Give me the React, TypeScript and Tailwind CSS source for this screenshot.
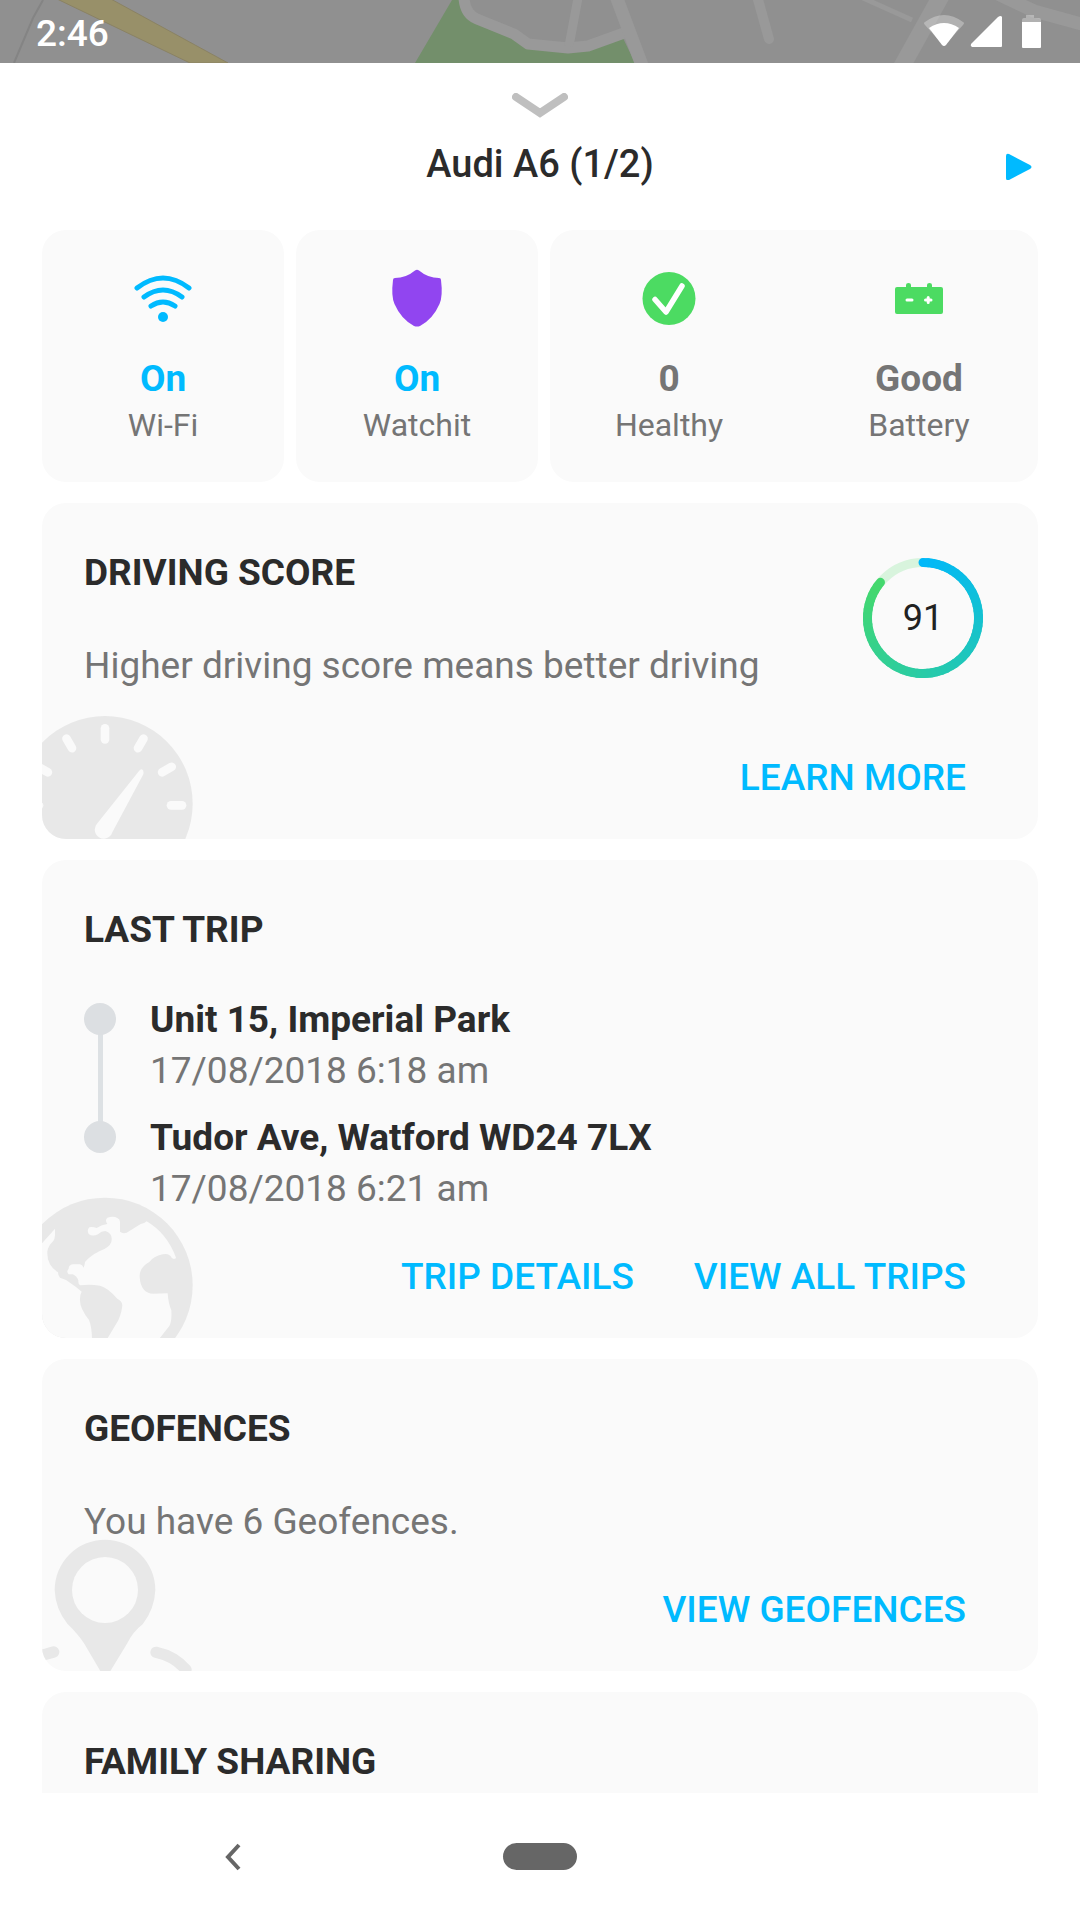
import type { ReactNode } from 'react';

const stops = [
  { place: 'Unit 15, Imperial Park', time: '17/08/2018 6:18 am' },
  { place: 'Tudor Ave, Watford WD24 7LX', time: '17/08/2018 6:21 am' },
];

function StatusBar() {
  return (
    <div className="relative h-[63px] shrink-0 overflow-hidden bg-[#909090]">
      <svg
        className="absolute inset-0 h-full w-full"
        viewBox="0 0 1080 63"
        preserveAspectRatio="xMidYMid slice"
        fill="none"
        aria-hidden="true"
      >
        <path d="M43 0L33 18L14 63" stroke="#848484" strokeWidth="2" />
        <path d="M55 -2L109 -2L228 63H190Z" fill="#989069" stroke="#8a8264" />
        <path d="M452 0L415 63H635L622 36L590 50L540 48L515 38L470 20L460 0Z" fill="#738f6b" />
        <g stroke="#999999" strokeLinejoin="round">
          <path d="M464 -2Q465 14 477 19L514 34L528 44L568 48L588 46L624 33" strokeWidth="11" />
          <path d="M578 -2L569 46" strokeWidth="9" />
          <path d="M616 -4L643 68" strokeWidth="13" />
          <path d="M757 -4L769 39" strokeWidth="10" strokeLinecap="round" />
          <path d="M863 -2L912 20" strokeWidth="5" />
          <path d="M941 -4L901 68" strokeWidth="17" />
          <path d="M998 -6L1034 11L1085 25" strokeWidth="13" />
        </g>
      </svg>
      <div className="relative flex h-full items-center justify-between pr-[39px] pl-9 text-white">
        <span className="pt-1 text-[37px] leading-[42px] font-medium">2:46</span>
        <svg className="h-9 w-[117px]" viewBox="0 0 117 36" fill="#fff" aria-hidden="true">
          <path d="M1 8Q20 -6 39 8Q41 9 39 11L20 32L1 11Q-1 9 1 8Z" opacity="0.3" />
          <path d="M5 14Q20 4 35 14L22 31Q20 33 18 31Z" />
          <path d="M78 3V32Q78 33 77 33H48Q46 32 47 30L74 3Q77 1 78 3Z" />
          <path d="M102 1H110V4H115Q117 4 117 6V9H98V6Q98 4 100 4H102Z" opacity="0.3" />
          <path d="M98 8H117V33Q117 34 116 34H99Q98 34 98 33Z" />
        </svg>
      </div>
    </div>
  );
}

function Header() {
  return (
    <header className="pt-[30px] pb-[45px]">
      <button type="button" aria-label="Collapse" className="mx-auto block">
        <svg className="h-[26px] w-14" viewBox="0 0 56 26" fill="none">
          <path d="M4 4L28 20L52 4" stroke="#bfbfbf" strokeWidth="8" strokeLinecap="round" />
        </svg>
      </button>
      <div className="mt-6 grid grid-cols-[1fr_auto_1fr] items-center pr-12">
        <h1 className="col-start-2 pl-12 text-[38px] leading-[42px] font-medium">Audi A6 (1/2)</h1>
        <button type="button" aria-label="Next vehicle" className="justify-self-end">
          <svg className="h-8 w-[26px]" viewBox="0 0 26 32" fill="#00baff">
            <path d="M0 8Q0 5 3 6L24 17Q27 19 24 21L3 32Q0 33 0 30Z" />
          </svg>
        </button>
      </div>
    </header>
  );
}

function WifiIcon() {
  return (
    <svg className="size-[60px]" viewBox="0 0 60 60" fill="none" stroke="#00baff" strokeWidth="5" strokeLinecap="round">
      <path d="M4 20Q30 0 56 20" />
      <path d="M11 29Q30 15 49 29" />
      <path d="M18 38Q30 30 42 38" />
      <circle cx="30" cy="49" r="5" fill="#00baff" stroke="none" />
    </svg>
  );
}

function ShieldIcon() {
  return (
    <svg className="size-[60px]" viewBox="0 0 60 60" fill="#9145f0">
      <path d="M28 2.500Q30 1 32 2.500Q41 10 52 10Q54 10 54 12Q56 28 52.500 36Q46 51 33 58Q30 59 27 58Q14 51 7.500 36Q4 28 6 12Q6 10 8 10Q19 10 28 2.500Z" />
    </svg>
  );
}

function CheckIcon() {
  return (
    <svg className="size-[60px]" viewBox="0 0 60 60" fill="none">
      <circle cx="30" cy="30.500" r="26.500" fill="#4cdb62" />
      <path d="M16 31.500L27 44L43 18" stroke="#fff" strokeWidth="5.500" strokeLinecap="round" strokeLinejoin="round" />
    </svg>
  );
}

function BatteryIcon() {
  return (
    <svg className="size-[60px]" viewBox="0 0 60 60" fill="none">
      <path
        d="M8 19H17V17Q17 15 19.500 15T22 17V19H38V17Q38 15 40.500 15T43 17V19H52Q54 19 54 21V44Q54 46 52 46H8Q6 46 6 44V21Q6 19 8 19Z"
        fill="#4cdb62"
      />
      <path d="M18 32H23M36.500 32H42M39.200 29.500V34.500" stroke="#fff" strokeWidth="3" strokeLinecap="round" />
    </svg>
  );
}

function Stat({ icon, value, label }: { icon: ReactNode; value: string; label: string }) {
  return (
    <div className="flex flex-col items-center">
      {icon}
      <span className="mt-[30px] text-[37px] leading-[42px] font-bold">{value}</span>
      <span className="mt-1.5 text-[32px] leading-[38px] text-[#757575]">{label}</span>
    </div>
  );
}

function StatCards() {
  return (
    <div className="grid grid-cols-[121fr_121fr_244fr] gap-3">
      <button type="button" className="rounded-3xl bg-[#fafafa] py-[38px] text-[#00baff]">
        <Stat icon={<WifiIcon />} value="On" label="Wi-Fi" />
      </button>
      <button type="button" className="rounded-3xl bg-[#fafafa] py-[38px] text-[#00baff]">
        <Stat icon={<ShieldIcon />} value="On" label="Watchit" />
      </button>
      <div className="grid grid-cols-2 gap-3 rounded-3xl bg-[#fafafa] py-[38px] text-[#757575]">
        <Stat icon={<CheckIcon />} value="0" label="Healthy" />
        <Stat icon={<BatteryIcon />} value="Good" label="Battery" />
      </div>
    </div>
  );
}

function Card({ title, art, children }: { title: string; art?: ReactNode; children?: ReactNode }) {
  return (
    <section className="relative overflow-hidden rounded-3xl bg-[#fafafa] pt-[49px] pr-[72px] pb-10 pl-[42px]">
      {art}
      <div className="relative">
        <h2 className="text-[37px] leading-[42px] font-bold">{title}</h2>
        {children}
      </div>
    </section>
  );
}

function Action({ children }: { children: ReactNode }) {
  return (
    <a href="#" className="text-[37px] leading-[42px] font-medium text-[#00baff]">
      {children}
    </a>
  );
}

function GaugeArt() {
  return (
    <svg className="absolute bottom-0 left-0 h-[130px] w-40" viewBox="36 656 480 390" fill="none" aria-hidden="true">
      <circle cx="225" cy="940" r="263" fill="#e8e8e8" />
      {[-90, -60, -30, 0, 30, 60, 90].map(angle => (
        <path
          key={angle}
          d="M225 714V747"
          stroke="#fafafa"
          strokeWidth="26"
          strokeLinecap="round"
          transform={`rotate(${angle} 225 945)`}
        />
      ))}
      <path d="M327 842L201 1000A27 27 0 1 0 247 1026L340 852Q342 840 336 837Q331 836 327 842Z" fill="#fafafa" />
    </svg>
  );
}

function GlobeArt() {
  return (
    <svg className="absolute bottom-0 left-0 h-[148px] w-40" viewBox="36 30 480 444" aria-hidden="true">
      <circle cx="225" cy="316" r="263" fill="#e8e8e8" />
      <g fill="#fafafa">
        <path d="M75 146L36 190V474H186Q185 440 177 420Q150 385 150 362Q149 345 155 335Q140 321 124 311Q108 297 90 293Q84 288 84 277Q50 255 52 215Q54 198 70 183Q74 178 75 165Z" />
        <path d="M350 124Q411 160 438 233Q434 240 425 233Q417 218 398 223Q370 229 358 246Q328 262 329 290Q332 340 370 341L413 340Q415 370 424 391Q426 425 418 438L388 476H232L265 421Q276 395 277 375Q275 362 262 356Q232 322 210 317Q180 312 150 316Q144 312 145 301Q140 288 128 283H116Q108 275 116 266Q116 255 128 253H150Q157 254 161 263Q165 252 165 246Q180 228 208 214Q238 203 244 186Q250 160 226 153Q214 153 204 163Q188 171 176 162Q170 150 178 142Q188 140 200 144Q216 134 232 132Q224 120 232 113Q250 107 262 114Q270 118 270 125V155Q278 162 290 158L332 132Q342 132 350 124Z" />
      </g>
    </svg>
  );
}

function PinArt() {
  return (
    <svg className="absolute bottom-0 left-0 h-[137px] w-40" viewBox="36 101 480 411" fill="none" aria-hidden="true">
      <path
        d="M225 118A151 151 0 0 1 376 269Q374 325 338 372Q310 393 291 430L240 514H212L163 430Q145 402 112 370Q76 325 74 269A151 151 0 0 1 225 118Z"
        fill="#e8e8e8"
      />
      <circle cx="225" cy="269" r="99" fill="#fafafa" />
      <path d="M30 465L50 461L71 455M378 456Q434 468 468 508" stroke="#e8e8e8" strokeWidth="34" strokeLinecap="round" />
    </svg>
  );
}

function ScoreRing({ score }: { score: number }) {
  const steps = 60;
  const sweep = 310;
  const point = (deg: number) => {
    const rad = (deg * Math.PI) / 180;
    return `${60 + 55.5 * Math.sin(rad)} ${60 - 55.5 * Math.cos(rad)}`;
  };
  const mix = (from: number, to: number, t: number) => Math.round(from + (to - from) * t);

  return (
    <div className="relative flex size-[120px] items-center justify-center">
      <svg className="absolute inset-0" viewBox="0 0 120 120" fill="none" strokeWidth="9" strokeLinecap="round" aria-hidden="true">
        <circle cx="60" cy="60" r="55.500" stroke="#d8f4dd" />
        {Array.from({ length: steps }, (_, i) => {
          const t = i / (steps - 1);
          return (
            <path
              key={i}
              d={`M${point((i * sweep) / steps)}A55.5 55.5 0 0 1 ${point(((i + 1) * sweep) / steps)}`}
              stroke={`rgb(${mix(0, 68, t)} ${mix(184, 216, t)} ${mix(250, 110, t)})`}
            />
          );
        })}
      </svg>
      <span className="relative text-[36px] leading-[42px] text-[#212121]">{score}</span>
    </div>
  );
}

function TripStops() {
  return (
    <ol className="mt-12 flex flex-col gap-[25px]">
      {stops.map((stop, i) => (
        <li key={stop.place} className="relative flex gap-[34px]">
          {i < stops.length - 1 && <span className="absolute top-5 left-[14px] h-[118px] w-[5px] bg-[#dde1e4]" />}
          <span className="relative mt-1 size-8 rounded-full bg-[#dcdfe2]" />
          <div>
            <p className="text-[37px] leading-[42px] font-bold">{stop.place}</p>
            <p className="mt-[9px] text-[37px] leading-[42px] text-[#757575]">{stop.time}</p>
          </div>
        </li>
      ))}
    </ol>
  );
}

function NavBar() {
  return (
    <nav className="grid h-[127px] shrink-0 grid-cols-3 items-center justify-items-center bg-white px-20">
      <button type="button" aria-label="Back">
        <svg className="h-7 w-4" viewBox="0 0 16 28" fill="none">
          <path d="M14 2L3 14L14 26" stroke="#666" strokeWidth="4" />
        </svg>
      </button>
      <button type="button" aria-label="Home" className="h-[27px] w-[74px] rounded-full bg-[#666]" />
    </nav>
  );
}

export default function App() {
  return (
    <div className="flex h-screen flex-col bg-white font-[Roboto,sans-serif] text-[#2b2b2b]">
      <StatusBar />
      <main className="min-h-0 flex-1 overflow-y-auto [scrollbar-width:none]">
        <Header />
        <div className="flex flex-col gap-[21px] px-[42px]">
          <StatCards />

          <Card title="DRIVING SCORE" art={<GaugeArt />}>
            <p className="mt-[51px] text-[37px] leading-[42px] text-[#757575]">
              Higher driving score means better driving
            </p>
            <div className="absolute top-1.5 -right-[17px]">
              <ScoreRing score={91} />
            </div>
            <div className="mt-[70px] flex justify-end">
              <Action>LEARN MORE</Action>
            </div>
          </Card>

          <Card title="LAST TRIP" art={<GlobeArt />}>
            <TripStops />
            <div className="mt-[46px] flex justify-end gap-[60px]">
              <Action>TRIP DETAILS</Action>
              <Action>VIEW ALL TRIPS</Action>
            </div>
          </Card>

          <Card title="GEOFENCES" art={<PinArt />}>
            <p className="mt-[51px] text-[37px] leading-[42px] text-[#757575]">You have 6 Geofences.</p>
            <div className="mt-[46px] flex justify-end">
              <Action>VIEW GEOFENCES</Action>
            </div>
          </Card>

          <Card title="FAMILY SHARING" />
        </div>
      </main>
      <NavBar />
    </div>
  );
}
